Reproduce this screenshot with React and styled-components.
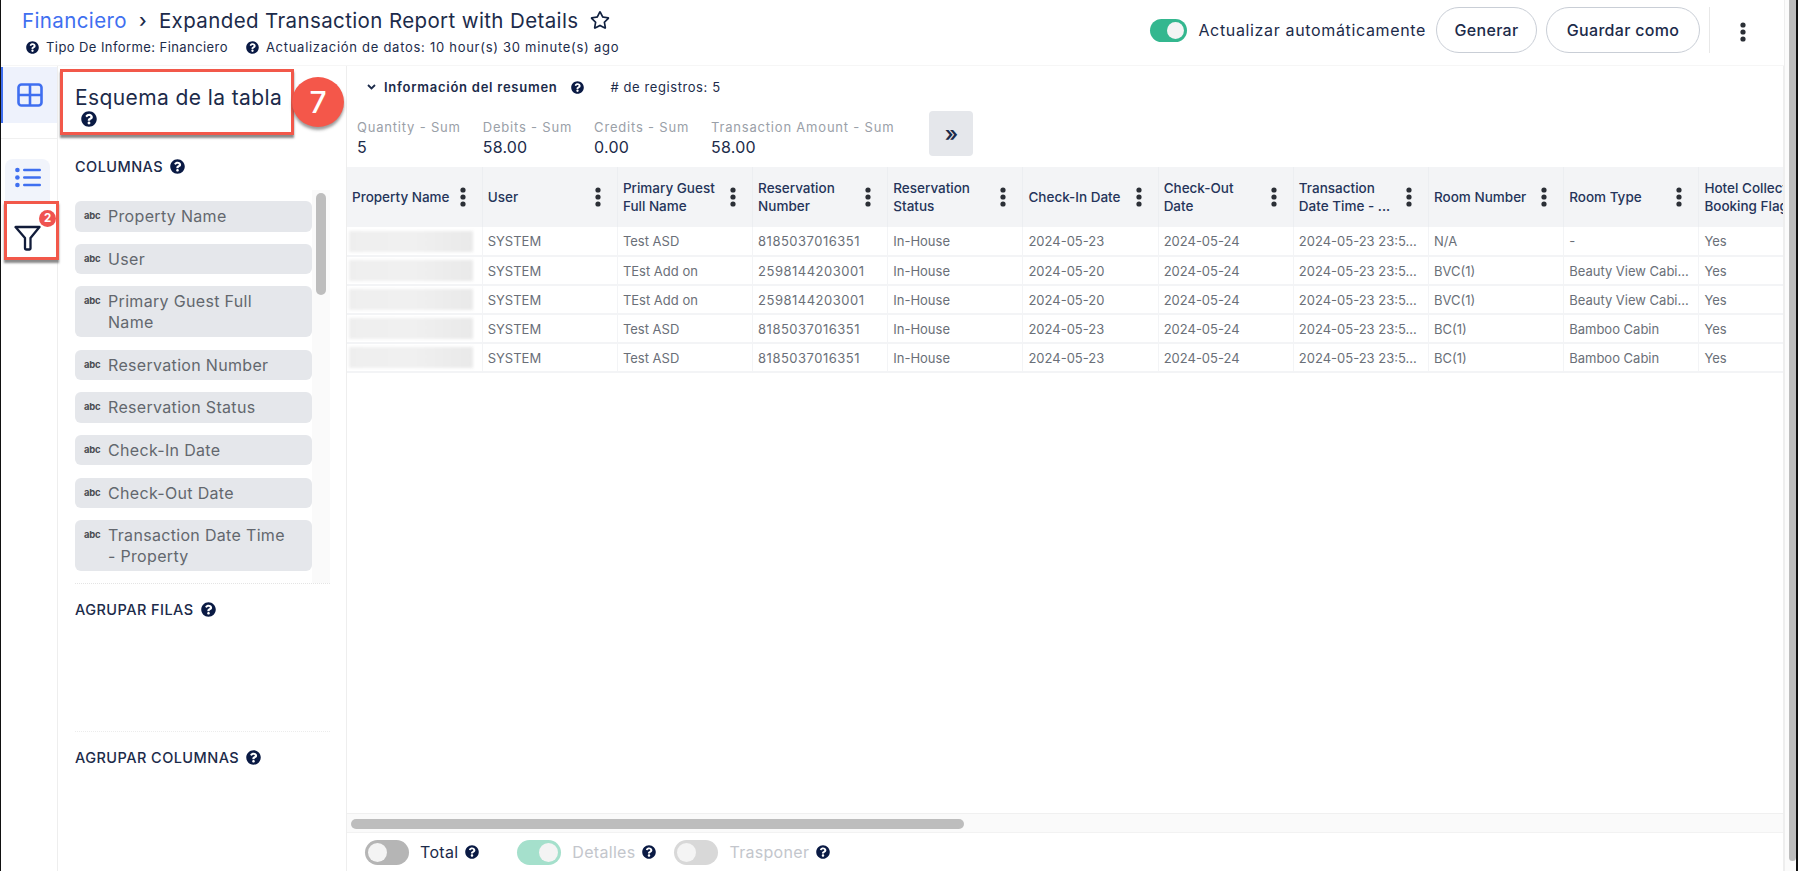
import React from 'react';
import styled, { createGlobalStyle } from 'styled-components';
import { FaQuestionCircle, FaRegStar } from 'react-icons/fa';

const navy = '#1c2b4a';
const helpNavy = '#0a1a44';
const uiFont = '"Inter", "Liberation Sans", sans-serif';

const GlobalStyle = createGlobalStyle`
	html, body {
		margin: 0;
		padding: 0;
		background: #fff;
	}
	body {
		font-family: ${uiFont};
		color: ${navy};
	}
	* {
		box-sizing: border-box;
	}
`;

const Frame = styled.div`
	width: 1798px;
	height: 871px;
	display: flex;
	overflow: hidden;
	border-left: 1px solid #111;
	border-right: 2px solid #111;
	background: #fff;
`;

const Content = styled.div`
	width: 1783px;
	display: flex;
	flex-direction: column;
`;

const PageScroll = styled.div`
	width: 12px;
	padding: 0 0 10px 4px;
	background: #fbfbfb;
	border-left: 1px solid #eee;
`;

const PageThumb = styled.div`
	height: 100%;
	background: #bdbdbd;
	border-radius: 0 0 4px 4px;
`;

/* top bar */
const TopBar = styled.header`
	height: 66px;
	flex-shrink: 0;
	display: flex;
	justify-content: space-between;
	border-bottom: 1px solid #f6f6f6;
	padding: 7px 38px 0 21px;
`;

const TitleBlock = styled.div`
	display: flex;
	flex-direction: column;
	gap: 6px;
`;

const TitleRow = styled.div`
	display: flex;
	align-items: center;
	height: 26px;
	font-size: 20.5px;
	letter-spacing: 0.38px;
	white-space: nowrap;
`;

const Crumb = styled.span`
	color: #3f6ff0;
`;

const CrumbArrow = styled.span`
	width: 32px;
	text-align: center;
	font-size: 19px;
	font-weight: 500;
`;

const StarIcon = styled(FaRegStar)`
	margin-left: 12px;
	font-size: 20px;
	color: #10203f;
`;

const MetaRow = styled.div`
	display: flex;
	align-items: center;
	font-size: 13px;
	padding-left: 4px;
	white-space: nowrap;
`;

const MetaItem = styled.span`
	display: flex;
	align-items: center;
	gap: 7px;
	margin-right: 18px;
	letter-spacing: ${(p) => p.$spacing}px;
`;

const Help = styled(FaQuestionCircle)`
	flex-shrink: 0;
	font-size: ${(p) => p.$size || 14}px;
	color: ${helpNavy};
`;

const Actions = styled.div`
	display: flex;
	align-items: flex-start;
`;

const AutoLabel = styled.span`
	margin: 13px 10px 0 11px;
	font-size: 16px;
	line-height: 20px;
	letter-spacing: 0.65px;
	white-space: nowrap;
`;

const PillButton = styled.button`
	height: 46px;
	width: ${(p) => p.$width}px;
	margin-right: 9px;
	border: 1px solid #c9ced6;
	border-radius: 23px;
	background: #fff;
	color: ${navy};
	font-family: ${uiFont};
	font-size: 16px;
	font-weight: 500;
	letter-spacing: 0.3px;
`;

const ActionDivider = styled.div`
	width: 1px;
	height: 46px;
	margin-right: 30px;
	background: #e8e8e8;
`;

const KebabSlot = styled.div`
	padding-top: 15px;
	line-height: 0;
`;

/* toggles */
const ToggleTrack = styled.span`
	position: relative;
	display: inline-block;
	flex-shrink: 0;
	width: ${(p) => p.$width}px;
	height: ${(p) => p.$height}px;
	margin-top: ${(p) => p.$top || 0}px;
	border-radius: 13px;
	background: ${(p) => p.$color};

	&::after {
		content: '';
		position: absolute;
		top: 3px;
		bottom: 3px;
		${(p) => (p.$on ? 'right: 3px;' : 'left: 3px;')}
		aspect-ratio: 1;
		border-radius: 50%;
		background: #f4f4f4;
	}
`;

/* body */
const Body = styled.div`
	flex: 1;
	display: flex;
	min-height: 0;
`;

const Rail = styled.nav`
	width: 56px;
	flex-shrink: 0;
	position: relative;
	z-index: 3;
	padding-top: 1px;
`;

const RailTab = styled.div`
	height: 56px;
	display: flex;
	align-items: center;
	justify-content: center;
	background: #eef2fc;
	border-left: 2px solid #3f6ff0;
`;

const RailDivider = styled.div`
	height: 1px;
	margin-top: 15px;
	background: #f0f0f0;
`;

const RailButton = styled.div`
	width: 45px;
	height: 42px;
	margin: 20px 0 0 4px;
	padding-top: 8px;
	display: flex;
	justify-content: center;
	background: #f1f4fb;
	border-radius: 8px 8px 0 0;
`;

const FilterBox = styled.div`
	position: relative;
	width: 55px;
	height: 59px;
	margin-left: 3px;
	padding: 21px 0 0 7px;
	background: #fff;
	border: 3px solid #f2584a;
	box-shadow: 0 3px 2px rgba(60, 60, 60, 0.6);
	line-height: 0;
`;

const FilterBadge = styled.span`
	position: absolute;
	top: 6px;
	right: 0;
	width: 17px;
	height: 17px;
	border-radius: 50%;
	background: #ef5350;
	color: #fff;
	font-size: 11.5px;
	font-weight: 700;
	line-height: 17px;
	text-align: center;
`;

const Panel = styled.aside`
	position: relative;
	z-index: 2;
	width: 290px;
	flex-shrink: 0;
	border-left: 1px solid #eee;
	border-right: 1px solid #eee;
`;

const PanelTitle = styled.div`
	width: 234px;
	height: 66px;
	margin: 3px 0 0 2px;
	padding: 13px 0 0 12px;
	background: #fff;
	border: 3px solid #f2584a;
	box-shadow: 0 3px 2px rgba(60, 60, 60, 0.6);
	font-size: 21px;
	line-height: 25px;
	letter-spacing: 0.4px;
	white-space: nowrap;

	svg {
		display: block;
		margin: 1px 0 0 6px;
	}
`;

const StepCircle = styled.div`
	position: absolute;
	top: 11px;
	left: 234px;
	width: 52px;
	height: 50px;
	border-radius: 50%;
	background: #f4574a;
	box-shadow: 0 3px 3px rgba(60, 60, 60, 0.5);
	color: #fff;
	font-size: 30px;
	font-weight: 500;
	line-height: 50px;
	text-align: center;
`;

const SectionHeading = styled.h3`
	display: flex;
	align-items: center;
	gap: 7px;
	height: 20px;
	margin: 0;
	font-size: 14.5px;
	font-weight: 500;
	letter-spacing: 0.45px;
	white-space: nowrap;
`;

const ColumnsHeading = styled(SectionHeading)`
	margin: 21px 0 14px 17px;
`;

const ChipViewport = styled.div`
	display: flex;
	height: 394px;
	margin-left: 17px;
	width: 255px;
	overflow: hidden;
	border-bottom: 1px dotted #e4e4e4;
`;

const ChipColumn = styled.div`
	width: 237px;
	flex-shrink: 0;
	display: flex;
	flex-direction: column;
	gap: 12.2px;
	padding-top: 11px;
`;

const Chip = styled.div`
	display: flex;
	gap: 8px;
	padding: 5px 20px 5px 9px;
	background: #e5e7eb;
	border-radius: 6px;
	color: #63676e;
	font-size: 16px;
	line-height: 20.5px;
	letter-spacing: 0.32px;
`;

const Abc = styled.span`
	flex-shrink: 0;
	width: 16px;
	font-size: 9.5px;
	font-weight: 700;
	letter-spacing: -0.2px;
	color: #4a4d52;
	line-height: 19px;
`;

const ChipTrack = styled.div`
	flex: 1;
	padding: 3px 4px 0;
	background: #fafafa;
`;

const ChipThumb = styled.div`
	height: 102px;
	background: #bdbdbd;
	border-radius: 5px;
`;

const GroupSection = styled.div`
	height: ${(p) => p.$height}px;
	margin-left: 17px;
	width: 255px;
	padding-top: 15px;
	border-bottom: ${(p) => (p.$last ? 'none' : '1px dotted #ececec')};
`;

/* main area */
const Main = styled.main`
	flex: 1;
	min-width: 0;
	display: flex;
	flex-direction: column;
	border-right: 1px solid #eee;
`;

const SummaryHead = styled.div`
	height: 42px;
	flex-shrink: 0;
	display: flex;
	align-items: center;
	padding-left: 20px;
	font-size: 13px;
	white-space: nowrap;
`;

const SummaryTitle = styled.span`
	margin: 0 13px 0 8px;
	font-weight: 600;
	letter-spacing: 0.75px;
`;

const RecordCount = styled.span`
	margin-left: 27px;
	letter-spacing: 0.58px;
`;

const Metrics = styled.div`
	height: 59px;
	flex-shrink: 0;
	display: flex;
	align-items: flex-start;
	gap: 22px;
	padding: 3px 0 0 10px;
`;

const Metric = styled.div`
	padding-top: 7px;
	white-space: nowrap;
`;

const MetricLabel = styled.div`
	font-size: 13px;
	line-height: 18px;
	letter-spacing: 0.8px;
	color: #9aa0a8;
`;

const MetricValue = styled.div`
	font-size: 16px;
	line-height: 22px;
	letter-spacing: 0.2px;
`;

const ExpandButton = styled.button`
	width: 44px;
	height: 45px;
	margin-left: 13px;
	border: none;
	border-radius: 4px;
	background: #e5e7eb;
	color: ${navy};
	font-family: ${uiFont};
	font-size: 21px;
	font-weight: 600;
	line-height: 1;
`;

const TableWrap = styled.div`
	flex: 1;
	min-height: 0;
	overflow: hidden;
`;

const Table = styled.table`
	table-layout: fixed;
	width: 1487px;
	border-collapse: collapse;
	font-size: 13px;
`;

const HeadCell = styled.th`
	width: 135.2px;
	height: 60px;
	padding: 0 16px 0 5px;
	background: #f3f4f6;
	border-right: 1px solid #eceef1;
	text-align: left;
	font-size: 13.5px;
	font-weight: 500;
	color: #25345a;
`;

const HeadInner = styled.div`
	display: flex;
	align-items: center;
	justify-content: space-between;
	line-height: 18.5px;
	white-space: pre-line;
`;

const HeadLabel = styled.span`
	white-space: ${(p) => (p.$clip ? 'pre' : 'pre-line')};
`;

const KebabWrap = styled.span`
	flex-shrink: 0;
	line-height: 0;
	${(p) => p.$clip && 'display: none;'}
`;

const Row = styled.tr`
	height: 29px;
	border-bottom: 2px solid #f3f4f6;
`;

const Cell = styled.td`
	padding: 0 5px;
	border-right: 1px solid #f3f4f6;
	color: #6a6f78;
	white-space: nowrap;
	overflow: hidden;
	letter-spacing: ${(p) => (p.$wide ? '0.5px' : 'normal')};
`;

const Redacted = styled.div`
	width: 124px;
	height: 21px;
	margin-left: -3px;
	background: linear-gradient(90deg, #eeeeee, #f0f0f0 50%, #e9e9e9);
	filter: blur(1.5px);
`;

const HScroll = styled.div`
	height: 19px;
	flex-shrink: 0;
	padding: 5px 4px 3px;
	background: #fafafa;
	border-top: 1px solid #f0f0f0;
`;

const HThumb = styled.div`
	width: ${(p) => p.$width}px;
	height: 100%;
	background: #bdbdbd;
	border-radius: 6px;
`;

const Footer = styled.div`
	height: 39px;
	flex-shrink: 0;
	display: flex;
	align-items: center;
	padding-left: 18px;
	border-top: 1px solid #f2f2f2;
`;

const FooterItem = styled.div`
	display: flex;
	align-items: center;
	margin-right: ${(p) => p.$after}px;
	font-size: 16px;
	letter-spacing: 0.3px;
	color: ${(p) => (p.$muted ? '#c3c6cc' : navy)};

	span + span {
		margin: 0 7px 0 11px;
	}
`;

const columns = [
	'Property Name',
	'User',
	'Primary Guest\nFull Name',
	'Reservation\nNumber',
	'Reservation\nStatus',
	'Check-In Date',
	'Check-Out\nDate',
	'Transaction\nDate Time - ...',
	'Room Number',
	'Room Type',
	'Hotel Collect\nBooking Flag'
];

const rows = [
	[ 'SYSTEM', 'Test ASD', '8185037016351', 'In-House', '2024-05-23', '2024-05-24', '2024-05-23 23:5...', 'N/A', '-', 'Yes' ],
	[ 'SYSTEM', 'TEst Add on', '2598144203001', 'In-House', '2024-05-20', '2024-05-24', '2024-05-23 23:5...', 'BVC(1)', 'Beauty View Cabi...', 'Yes' ],
	[ 'SYSTEM', 'TEst Add on', '2598144203001', 'In-House', '2024-05-20', '2024-05-24', '2024-05-23 23:5...', 'BVC(1)', 'Beauty View Cabi...', 'Yes' ],
	[ 'SYSTEM', 'Test ASD', '8185037016351', 'In-House', '2024-05-23', '2024-05-24', '2024-05-23 23:5...', 'BC(1)', 'Bamboo Cabin', 'Yes' ],
	[ 'SYSTEM', 'Test ASD', '8185037016351', 'In-House', '2024-05-23', '2024-05-24', '2024-05-23 23:5...', 'BC(1)', 'Bamboo Cabin', 'Yes' ]
];

const schemaColumns = [
	'Property Name',
	'User',
	'Primary Guest Full Name',
	'Reservation Number',
	'Reservation Status',
	'Check-In Date',
	'Check-Out Date',
	'Transaction Date Time - Property'
];

const metrics = [
	{ label: 'Quantity - Sum', value: '5' },
	{ label: 'Debits - Sum', value: '58.00' },
	{ label: 'Credits - Sum', value: '0.00' },
	{ label: 'Transaction Amount - Sum', value: '58.00' }
];

const Kebab = ({ size = 5, color = '#2b2f36' }) => (
	<svg width={size + 1} height={size * 4} viewBox="0 0 6 20" fill={color}>
		<circle cx="3" cy="3" r="2.6" />
		<circle cx="3" cy="10" r="2.6" />
		<circle cx="3" cy="17" r="2.6" />
	</svg>
);

const TableIcon = () => (
	<svg width="26" height="24" viewBox="0 0 26 24" fill="none" stroke="#3f6ff0" strokeWidth="2.6">
		<rect x="1.5" y="1.5" width="23" height="21" rx="3" />
		<path d="M1.5 12h23M13 1.5v21" />
	</svg>
);

const ListIcon = () => (
	<svg width="26" height="21" viewBox="0 0 26 21" fill="#3f6ff0">
		<circle cx="2.4" cy="3" r="2.3" />
		<circle cx="2.4" cy="10.5" r="2.3" />
		<circle cx="2.4" cy="18" r="2.3" />
		<rect x="8" y="1.8" width="18" height="2.4" rx="1.2" />
		<rect x="8" y="9.3" width="18" height="2.4" rx="1.2" />
		<rect x="8" y="16.8" width="18" height="2.4" rx="1.2" />
	</svg>
);

const FunnelIcon = () => (
	<svg width="27" height="26" viewBox="0 0 27 26" fill="none" stroke="#111c3a" strokeWidth="2.3" strokeLinejoin="round">
		<path d="M1.5 2h24L16.5 13v10.5a1 1 0 0 1-1 1h-3a1.5 1.5 0 0 1-1.5-1.5V13z" />
	</svg>
);

function App() {
	return (
		<Frame>
			<GlobalStyle />
			<Content>
				<TopBar>
					<TitleBlock>
						<TitleRow>
							<Crumb>Financiero</Crumb>
							<CrumbArrow>›</CrumbArrow>
							<span>Expanded Transaction Report with Details</span>
							<StarIcon />
						</TitleRow>
						<MetaRow>
							<MetaItem $spacing={0.42}>
								<Help $size={13} />
								Tipo De Informe: Financiero
							</MetaItem>
							<MetaItem $spacing={0.72}>
								<Help $size={13} />
								Actualización de datos: 10 hour(s) 30 minute(s) ago
							</MetaItem>
						</MetaRow>
					</TitleBlock>
					<Actions>
						<ToggleTrack $width={37} $height={23} $top={12} $color="#34b78f" $on />
						<AutoLabel>Actualizar automáticamente</AutoLabel>
						<PillButton $width={101}>Generar</PillButton>
						<PillButton $width={154}>Guardar como</PillButton>
						<ActionDivider />
						<KebabSlot>
							<Kebab size={5} />
						</KebabSlot>
					</Actions>
				</TopBar>

				<Body>
					<Rail>
						<RailTab>
							<TableIcon />
						</RailTab>
						<RailDivider />
						<RailButton>
							<ListIcon />
						</RailButton>
						<FilterBox>
							<FunnelIcon />
							<FilterBadge>2</FilterBadge>
						</FilterBox>
					</Rail>

					<Panel>
						<PanelTitle>
							Esquema de la tabla
							<Help $size={16} />
						</PanelTitle>
						<StepCircle>7</StepCircle>

						<ColumnsHeading>
							COLUMNAS <Help $size={15} />
						</ColumnsHeading>
						<ChipViewport>
							<ChipColumn>
								{schemaColumns.map((name) => (
									<Chip key={name}>
										<Abc>abc</Abc>
										<span>{name}</span>
									</Chip>
								))}
							</ChipColumn>
							<ChipTrack>
								<ChipThumb />
							</ChipTrack>
						</ChipViewport>

						<GroupSection $height={148}>
							<SectionHeading>
								AGRUPAR FILAS <Help $size={15} />
							</SectionHeading>
						</GroupSection>
						<GroupSection $height={100} $last>
							<SectionHeading>
								AGRUPAR COLUMNAS <Help $size={15} />
							</SectionHeading>
						</GroupSection>
					</Panel>

					<Main>
						<SummaryHead>
							<svg width="9" height="6" viewBox="0 0 9 6" fill="none" stroke={navy} strokeWidth="1.8">
								<path d="M1 1l3.5 3.5L8 1" />
							</svg>
							<SummaryTitle>Información del resumen</SummaryTitle>
							<Help $size={13} />
							<RecordCount># de registros: 5</RecordCount>
						</SummaryHead>

						<Metrics>
							{metrics.map((m) => (
								<Metric key={m.label}>
									<MetricLabel>{m.label}</MetricLabel>
									<MetricValue>{m.value}</MetricValue>
								</Metric>
							))}
							<ExpandButton>»</ExpandButton>
						</Metrics>

						<TableWrap>
							<Table>
								<thead>
									<tr>
										{columns.map((c, i) => (
											<HeadCell key={c}>
												<HeadInner>
													<HeadLabel $clip={i === columns.length - 1}>{c}</HeadLabel>
													<KebabWrap $clip={i === columns.length - 1}>
														<Kebab size={5} />
													</KebabWrap>
												</HeadInner>
											</HeadCell>
										))}
									</tr>
								</thead>
								<tbody>
									{rows.map((row, r) => (
										<Row key={r}>
											<Cell>
												<Redacted />
											</Cell>
											{row.map((value, i) => (
												<Cell key={i} $wide={i === 2}>
													{value}
												</Cell>
											))}
										</Row>
									))}
								</tbody>
							</Table>
						</TableWrap>

						<HScroll>
							<HThumb $width={613} />
						</HScroll>

						<Footer>
							<FooterItem $after={38}>
								<ToggleTrack $width={44} $height={25} $color="#b5b5b5" />
								<span>Total</span>
								<Help $size={14} />
							</FooterItem>
							<FooterItem $after={18} $muted>
								<ToggleTrack $width={44} $height={25} $color="#a5e0cc" $on />
								<span>Detalles</span>
								<Help $size={14} />
							</FooterItem>
							<FooterItem $after={0} $muted>
								<ToggleTrack $width={44} $height={25} $color="#d8d8d8" />
								<span>Trasponer</span>
								<Help $size={14} />
							</FooterItem>
						</Footer>
					</Main>
				</Body>
			</Content>
			<PageScroll>
				<PageThumb />
			</PageScroll>
		</Frame>
	);
}

export default App;
